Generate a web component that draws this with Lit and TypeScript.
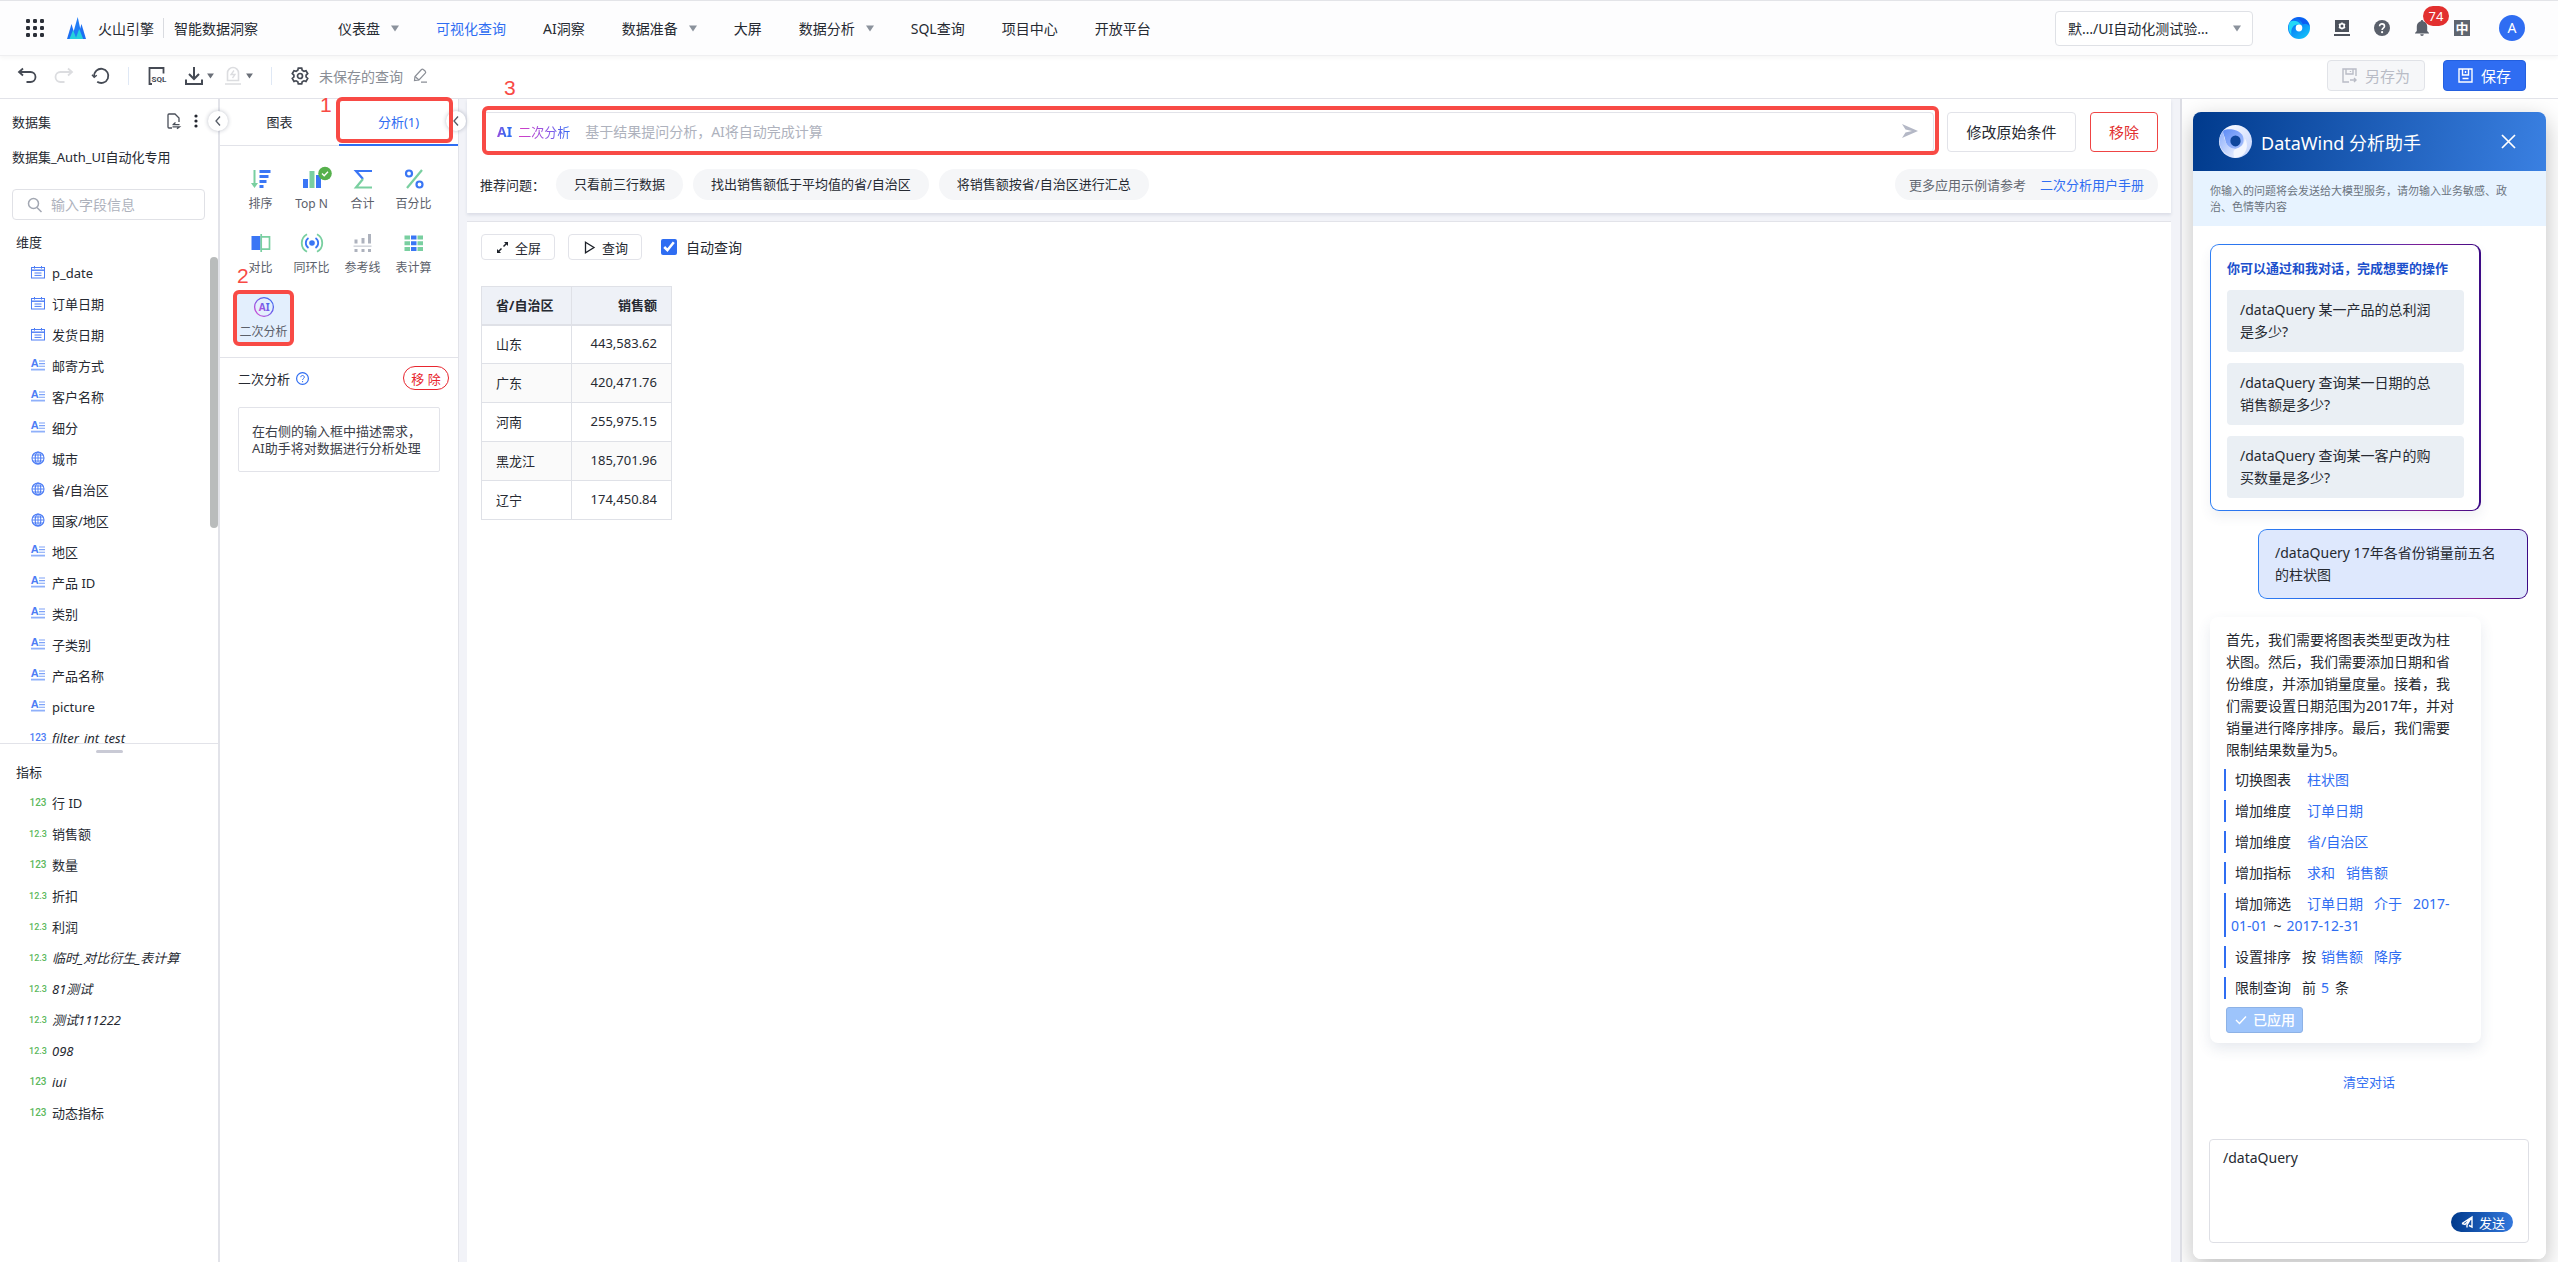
import { LitElement, html, css, svg, nothing } from "lit";
import { customElement } from "lit/decorators.js";
import { classMap } from "lit/directives/class-map.js";

type FieldKind = "date" | "text" | "geo" | "int" | "float";
interface Field {
  kind: FieldKind;
  name: string;
  derived?: boolean;
}

const DIMENSIONS: Field[] = [
  { kind: "date", name: "p_date" },
  { kind: "date", name: "订单日期" },
  { kind: "date", name: "发货日期" },
  { kind: "text", name: "邮寄方式" },
  { kind: "text", name: "客户名称" },
  { kind: "text", name: "细分" },
  { kind: "geo", name: "城市" },
  { kind: "geo", name: "省/自治区" },
  { kind: "geo", name: "国家/地区" },
  { kind: "text", name: "地区" },
  { kind: "text", name: "产品 ID" },
  { kind: "text", name: "类别" },
  { kind: "text", name: "子类别" },
  { kind: "text", name: "产品名称" },
  { kind: "text", name: "picture" },
  { kind: "int", name: "filter_int_test", derived: true },
];

const METRICS: Field[] = [
  { kind: "int", name: "行 ID" },
  { kind: "float", name: "销售额" },
  { kind: "int", name: "数量" },
  { kind: "float", name: "折扣" },
  { kind: "float", name: "利润" },
  { kind: "float", name: "临时_对比衍生_表计算", derived: true },
  { kind: "float", name: "81测试", derived: true },
  { kind: "float", name: "测试111222", derived: true },
  { kind: "float", name: "098", derived: true },
  { kind: "int", name: "iui", derived: true },
  { kind: "int", name: "动态指标" },
];

const NAV = [
  { label: "仪表盘", menu: true },
  { label: "可视化查询", active: true },
  { label: "AI洞察" },
  { label: "数据准备", menu: true },
  { label: "大屏" },
  { label: "数据分析", menu: true },
  { label: "SQL查询" },
  { label: "项目中心" },
  { label: "开放平台" },
];

const ROWS = [
  ["山东", "443,583.62"],
  ["广东", "420,471.76"],
  ["河南", "255,975.15"],
  ["黑龙江", "185,701.96"],
  ["辽宁", "174,450.84"],
];

const fieldIcon = (kind: FieldKind) => {
  switch (kind) {
    case "date":
      return html`<svg class="ficon" viewBox="0 0 14 14" fill="none" stroke="#4d7df5">
        <rect x="0.5" y="2.5" width="13" height="10.5" />
        <path d="M0.5 5.2h13" stroke-width="1.4" />
        <path d="M3.5 1v2.6M10.5 1v2.6M3.5 8h7M3.5 10.4h7" />
      </svg>`;
    case "text":
      return html`<svg class="ficon" viewBox="0 0 14 14">
        <text class="fa" x="-0.3" y="9.4">A</text>
        <path d="M8 3h6M8 5.6h6M8 8.2h6" stroke="#7ea2f8" stroke-width="1.1" />
        <path d="M0 11.6h14" stroke="#8fb0fa" stroke-width="1.8" />
      </svg>`;
    case "geo":
      return html`<svg class="ficon" viewBox="0 0 14 14" fill="none" stroke="#4d7df5" stroke-width="1.1">
        <circle cx="7" cy="7" r="6" />
        <ellipse cx="7" cy="7" rx="2.8" ry="6" />
        <path d="M7 1v12M1 7h12M1.8 4h10.4M1.8 10h10.4" stroke-width="0.9" />
      </svg>`;
    default:
      return nothing;
  }
};

const caret = (cls = "caret") =>
  html`<svg class=${cls} viewBox="0 0 8 7"><path d="M0 0.5h8L4 6.5z" fill="currentColor" /></svg>`;

@customElement("app-root")
export class AppRoot extends LitElement {
  static styles = css`
    :host {
      display: block;
      font-family: "Noto Sans", "Noto Sans CJK SC", sans-serif;
      font-size: 13px;
      color: #262a32;
      --blue: #2f6df2;
      --line: #e2e3e9;
      --red: #f84a45;
    }
    * { box-sizing: border-box; }
    button, input, select, textarea { font: inherit; color: inherit; margin: 0; }
    button { cursor: pointer; background: none; border: 0; padding: 0; white-space: nowrap; }
    a { color: inherit; text-decoration: none; }
    ul { list-style: none; margin: 0; padding: 0; }
    p, h1, h2, h3 { margin: 0; font-weight: 400; font-size: inherit; }
    svg { display: block; flex: none; overflow: visible; }
    .page { display: flex; flex-direction: column; height: 100vh; min-height: 1200px; background: #fff; overflow: hidden; }

    /* top bar */
    .top {
      display: flex; align-items: center; flex: none; height: 56px; padding: 0 33px 0 26px;
      border-top: 1px solid #e3e4e8; border-bottom: 1px solid #efeff1; background: #fdfdfe;
      font-size: 14px; box-shadow: 0 2px 4px rgba(0, 0, 0, 0.04); z-index: 1;
    }
    .apps { width: 18px; height: 18px; margin-right: 23px; }
    .brand { display: flex; align-items: center; }
    .brand svg { width: 19px; height: 22px; margin-right: 12px; }
    .brand span + span { border-left: 1px solid #d9dbe0; padding-left: 10px; margin-left: 9px; }
    .nav { display: flex; gap: 37px; margin-left: 80px; flex: 1; }
    .nav a { display: flex; align-items: center; gap: 11px; white-space: nowrap; }
    .nav a.active { color: var(--blue); }
    .caret { width: 8px; height: 7px; color: #8b929c; }
    .space { display: grid; width: 198px; height: 35px; margin-right: 35px; align-items: center; }
    .space > * { grid-area: 1 / 1; }
    .space select {
      appearance: none; width: 100%; height: 35px; border: 1px solid #dfe1e6; border-radius: 4px;
      background: #fff; padding: 0 36px 0 12px; text-overflow: ellipsis;
    }
    .space .caret { justify-self: end; margin-right: 12px; pointer-events: none; }
    .tray { display: flex; align-items: center; gap: 24px; }
    .tray svg { width: 16px; height: 16px; }
    .tray .orb { width: 22px; height: 22px; }
    .bell { position: relative; }
    .badge {
      position: absolute; left: 9px; top: -14px; width: 26px; height: 20px; border-radius: 10px;
      background: #e2302f; color: #fff; font-size: 13px; line-height: 20px; text-align: center;
    }
    .zh { width: 16px; height: 16px; background: #5f656f; color: #fff; font-size: 13px; font-weight: 700; line-height: 16px; text-align: center; }
    .avatar { width: 26px; height: 26px; border-radius: 50%; background: #2f6df2; color: #fff; line-height: 26px; text-align: center; margin-left: 5px; }

    /* tool bar */
    .bar { display: flex; align-items: center; flex: none; height: 43px; padding: 0 32px 3px 18px; border-bottom: 1px solid var(--line); color: #454a54; }
    .bar button { display: flex; align-items: center; gap: 4px; }
    .bar .ic { width: 18px; height: 18px; fill: none; stroke: currentColor; stroke-width: 2; }
    .bar .dim { color: #dcdde0; }
    .bar .small { width: 7px; height: 6px; color: #6a6f78; }
    .bar .acts { display: flex; gap: 19px; }
    .bar .pair { display: flex; gap: 10px; }
    .bar .sep { width: 1px; height: 18px; background: #dfe8f5; margin: 0 19px 0 18px; }
    .bar .title { display: flex; align-items: center; gap: 10px; font-size: 14px; color: #8a8e96; flex: 1; }
    .bar .pen { width: 15px; height: 15px; stroke-width: 1.2; }
    .bar .sqlt { font: 700 8px Roboto, sans-serif; fill: currentColor; stroke: none; }
    .bar .btn { height: 31px; border: 1px solid #e1e3e8; border-radius: 4px; font-size: 15px; gap: 8px; padding: 0 14px; margin-left: 18px; background: #f6f7f9; color: #b9bcc6; }
    .bar .btn svg { width: 15px; height: 15px; fill: none; stroke: currentColor; stroke-width: 1.4; }
    .bar .save { background: var(--blue); border-color: #2460e0; color: #fff; }

    .body { display: flex; flex: 1; min-height: 0; background: #f2f3f8; }

    /* field list */
    .fields { position: relative; flex: none; width: 220px; border-right: 2px solid var(--line); background: #fff; display: flex; flex-direction: column; }
    .dims { flex: 645 1 0; min-height: 0; display: flex; flex-direction: column; overflow: hidden; }
    .mets { flex: 518 1 0; min-height: 0; border-top: 1px solid var(--line); overflow: hidden; }
    .fhead { display: flex; align-items: center; height: 44px; padding: 0 20px 0 12px; gap: 14px; flex: none; }
    .fhead h2 { flex: 1; }
    .fhead svg { width: 13px; height: 16px; }
    .fhead .more { width: 4px; height: 14px; }
    .dsname { height: 28px; line-height: 28px; padding-left: 12px; flex: none; white-space: nowrap; }
    .search { display: flex; align-items: center; gap: 8px; margin: 18px 13px 0 12px; height: 31px; flex: none; border: 1px solid #e0e1e6; border-radius: 4px; padding: 0 14px; }
    .search svg { width: 16px; height: 16px; }
    .search input { border: 0; outline: 0; padding: 0; width: 100%; min-width: 0; font-size: 14px; background: none; }
    ::placeholder { color: #aeb2bd; opacity: 1; }
    .ftitle { height: 26px; line-height: 26px; padding-left: 16px; flex: none; }
    .dims .ftitle { margin: 9px 0 2px; }
    .fwrap { display: flex; flex: 1; min-height: 0; overflow: hidden; }
    .fwrap ul { flex: 1; }
    .thumb { width: 8px; height: 271px; border-radius: 4px; background: #b9bcbc; }
    .frow { display: flex; align-items: center; gap: 7px; height: 31px; padding-left: 31px; white-space: nowrap; }
    .frow.derived .fname { font-style: italic; }
    .ficon { width: 14px; height: 14px; margin-top: -2px; }
    .fa { font: 700 11px "Liberation Sans", sans-serif; fill: #4d7df5; }
    .fnum { width: 14px; font: 500 10px/14px Roboto, sans-serif; color: #5cb85c; display: flex; justify-content: center; }
    .fnum.float { font-size: 9px; }
    .dims .fnum { color: #4d7df5; }
    .grip { width: 27px; height: 3px; border-radius: 2px; background: #c9cad5; margin: 6px auto 6px; }
    .mets .ftitle { margin-bottom: 2px; }
    .fold {
      position: absolute; right: -10px; top: 12px; width: 20px; height: 20px; border-radius: 50%; z-index: 2;
      background: #fff; box-shadow: 0 0 4px rgba(30, 40, 70, 0.3); display: flex; align-items: center; justify-content: center;
    }
    .fold svg { width: 6px; height: 10px; fill: none; stroke: #555b66; stroke-width: 1.3; }

    /* analysis panel */
    .panel { position: relative; flex: none; width: 239px; border-right: 1px solid var(--line); background: #fff; margin-right: 8px; }
    .panel .fold { right: -8px; }
    .tabs { display: grid; grid-template-columns: 1fr 1fr; height: 47px; border-bottom: 1px solid var(--line); }
    .tabs button { position: relative; padding-bottom: 2px; }
    .tabs button.on { color: var(--blue); }
    .tabs button.on::after { content: ""; position: absolute; left: 0; right: 0; bottom: -1px; height: 2px; background: var(--blue); }
    .mark { position: absolute; border: 4px solid var(--red); border-radius: 6px; z-index: 3; pointer-events: none; }
    .m1 { inset: -2px 5px 2px -3px; }
    .m2 { inset: -4px -4px -4px -4px; }
    .m3 { inset: -7px -6px -4px -1px; }
    .num { position: absolute; z-index: 3; font: 21px/20px "Liberation Sans", sans-serif; color: var(--red); pointer-events: none; }
    .n1 { left: 100px; top: -4px; }
    .n2 { left: 0; top: -28px; }
    .n3 { left: 37px; top: -21px; }
    .tools { display: grid; grid-template-columns: repeat(4, 51px); row-gap: 18px; padding: 22px 0 14px 15px; border-bottom: 1px solid var(--line); }
    .tool { position: relative; display: flex; flex-direction: column; align-items: center; gap: 4px; font-size: 12px; line-height: 20px; color: #5b606a; }
    .tool svg { width: 22px; height: 22px; }
    .tool.on { width: 53px; margin: -2px 0 0 2px; padding-top: 2px; background: #e3effd; border-bottom: 1px solid #8fb6f0; }
    .tool .ait { font: 700 10px "Noto Sans", sans-serif; }
    .sub { display: flex; align-items: center; padding: 8px 9px 0 18px; }
    .sub svg { width: 13px; height: 13px; margin-left: 6px; }
    .sub button { margin-left: auto; height: 24px; width: 46px; border: 1px solid #e8262f; border-radius: 12px; color: #e8262f; }
    .tip { margin: 17px 18px 0 18px; border: 1px solid var(--line); border-radius: 2px; padding: 15px 13px 14px; line-height: 17px; color: #3c4049; white-space: nowrap; }

    /* result area */
    .main { position: relative; flex: 1; min-width: 0; display: flex; flex-direction: column; gap: 8px; }
    .ask { background: #fff; padding: 13px 13px 13px 15px; box-shadow: 0 2px 3px rgba(40, 60, 100, 0.12); }
    .askrow { display: flex; height: 40px; }
    .askbox { position: relative; flex: 1; display: flex; align-items: center; border: 1px solid var(--line); border-radius: 4px; padding: 0 15px 2px 14px; margin-right: 13px; }
    .ai { font-weight: 700; font-size: 14px; background: linear-gradient(90deg, #a14bdc, #2f6df2 60%); background-clip: text; color: transparent; margin-right: 6px; }
    .aiw { background: linear-gradient(90deg, #d63cc4, #8a58e6 60%, #2f6df2); background-clip: text; color: transparent; margin-right: 15px; white-space: nowrap; }
    .askbox input { flex: 1; border: 0; outline: 0; padding: 0; font-size: 14px; background: none; }
    .askbox svg { width: 16px; height: 14px; }
    .askrow > button { border: 1px solid var(--line); border-radius: 4px; font-size: 15px; padding-bottom: 2px; }
    .edit { width: 129px; margin-right: 14px; }
    .askrow > .drop { width: 68px; border-color: #ef4444; color: #e2302f; }
    .chips { display: flex; align-items: center; margin-top: 17px; gap: 10px; white-space: nowrap; }
    .chips span.lab { width: 66px; margin-left: -2px; }
    .chips button, .more-help { height: 31px; border-radius: 16px; background: #f5f6f8; padding: 0 18px 2px; }
    .more-help { margin-left: auto; display: flex; align-items: center; gap: 14px; padding: 0 14px; color: #646973; }
    .more-help a, .link { color: var(--blue); }
    .result { flex: 1; border-top: 1px solid var(--line); padding: 12px 14px; background: #fff; }
    .runs { display: flex; align-items: center; }
    .runs button { display: flex; align-items: center; gap: 6px; height: 26px; border: 1px solid var(--line); border-radius: 4px; padding: 0 13px 0 14px; margin-right: 13px; }
    .runs svg { width: 13px; height: 13px; fill: none; stroke: #1d2129; stroke-width: 1.3; }
    .runs label { display: flex; align-items: center; gap: 9px; font-size: 14px; margin-left: 6px; }
    .runs input { width: 16px; height: 16px; accent-color: var(--blue); }
    table { border-collapse: collapse; margin-top: 26px; font-size: 13px; }
    th, td { border: 1px solid #dfe1e7; height: 39px; padding: 0 14px 2px; text-align: left; }
    th { background: #eef1f7; height: 38px; border-bottom-width: 2px; font-weight: 700; width: 90px; white-space: nowrap; }
    th + th, td + td { text-align: right; width: 100px; }
    tr:nth-child(even) td { background: #fafafa; }

    /* assistant */
    .side { flex: none; width: 378px; margin-left: 9px; border-left: 2px solid #dcdde4; background: #fff; padding: 13px 12px 3px 11px; display: flex; overflow: hidden; }
    .bot { flex: 1; min-width: 0; display: flex; flex-direction: column; border-radius: 8px; overflow: hidden; background: #fff; }
    .shade { flex: 1; min-width: 0; display: flex; border-radius: 8px; box-shadow: 0 8px 24px rgba(0, 0, 0, 0.26); }
    .bhead { display: flex; align-items: center; height: 59px; flex: none; padding: 0 30px 0 26px; color: #fff; font-size: 18px; background: linear-gradient(100deg, #003a8c, #3a80e2); }
    .bhead svg { width: 33px; height: 33px; margin-right: 9px; }
    .bhead h2 { flex: 1; white-space: nowrap; }
    .bhead button svg { width: 15px; height: 15px; margin: 0; stroke: #fff; stroke-width: 1.7; }
    .warn { flex: none; height: 55px; background: #e7f3ff; color: #6b7480; font-size: 11px; line-height: 16px; padding: 12px 30px 0 17px; }
    .talk { flex: 1; min-height: 0; display: flex; flex-direction: column; align-items: flex-start; padding: 18px 18px 0 17px; font-size: 14px; line-height: 22px; }
    .intro, .mine {
      border: 1px solid transparent; border-radius: 9px;
      background: linear-gradient(#fff, #fff) padding-box, linear-gradient(90deg, #2f80f5, #1d4ed8 50%, #86198f 80%, #3b0a85) border-box;
    }
    .intro { width: 271px; padding: 12px 16px 12px; border-width: 1px 2px 1px 1px; box-shadow: 0 6px 12px rgba(60, 80, 120, 0.08); }
    .intro h3 { font-size: 13px; font-weight: 700; color: #1c50cc; white-space: nowrap; margin-bottom: 11px; }
    .intro button { display: block; width: 237px; height: 62px; text-align: left; white-space: normal; background: #eaeff4; border-radius: 4px; padding: 0 22px 0 13px; line-height: 22px; }
    .intro button + button { margin-top: 11px; }
    .mine { align-self: flex-end; width: 270px; margin-top: 18px; padding: 12px 26px 12px 16px; background: linear-gradient(#dee8fd, #dee8fd) padding-box, linear-gradient(90deg, #2f80f5, #1d4ed8 50%, #86198f 80%, #3b0a85) border-box; }
    .reply { width: 271px; margin-top: 18px; padding: 12px 21px 10px 16px; border-radius: 8px; box-shadow: 0 6px 14px rgba(60, 80, 120, 0.12); }
    .steps { display: grid; gap: 9px; margin: 8px 0 8px -2px; }
    .steps li { border-left: 2px solid var(--blue); padding-left: 5px; min-height: 22px; }
    .steps .k { margin: 0 11px 0 4px; }
    .steps .v { color: var(--blue); margin: 0 6px 0 5px; }
    .done { display: flex; align-items: center; gap: 6px; height: 26px; border: 1px solid #8db2e6; border-radius: 3px; background: #9dc4fb; color: #fff; padding: 0 7px 0 8px; font-weight: 500; }
    .done svg { width: 12px; height: 10px; }
    .clear { align-self: center; font-size: 13px; line-height: 20px; margin: 29px 0 0; }
    .write { position: relative; display: flex; flex: none; flex-direction: column; height: 104px; margin: 0 17px 16px 16px; border: 1px solid #dedfe5; border-radius: 4px; }
    .write textarea { flex: 1; border: 0; outline: 0; resize: none; background: none; padding: 8px 13px; font-size: 14px; line-height: 20px; }
    .send { align-self: flex-end; display: flex; align-items: center; gap: 6px; height: 20px; border-radius: 10px; margin: 0 15px 10px 0; padding: 0 8px 0 10px; color: #fff; background: linear-gradient(90deg, #003a8c, #3378dd); }
    .send svg { width: 12px; height: 12px; fill: none; stroke: #fff; stroke-width: 1.4; }
  `;

  private field(f: Field) {
    const numeric = f.kind === "int" || f.kind === "float";
    return html`<li class=${classMap({ frow: true, derived: !!f.derived })}>
      ${numeric
        ? html`<span class=${classMap({ fnum: true, float: f.kind === "float" })}>${f.kind === "int" ? "123" : "12.3"}</span>`
        : fieldIcon(f.kind)}
      <span class="fname">${f.name}</span>
    </li>`;
  }

  private fold(label: string) {
    return html`<button class="fold" aria-label=${label}><svg viewBox="0 0 6 10"><path d="M5 0.5L1 5l4 4.5" /></svg></button>`;
  }

  private top() {
    return html`<header class="top">
      <svg class="apps" viewBox="0 0 18 18" fill="#2b2f38">
        ${[0, 7, 14].map((y) => [0, 7, 14].map((x) => svg`<rect x=${x} y=${y} width="4" height="4" rx="1.2" />`))}
      </svg>
      <div class="brand">
        <svg viewBox="0 0 19 22">
          <path d="M0 22L4.500 7 9 22z" fill="#1d6ff2" />
          <path d="M10 22L14.500 7 19 22z" fill="#1d6ff2" />
          <path d="M4.500 22L10.700 0l4.800 22z" fill="#1f7cf6" />
          <path d="M2.500 22L6 13l3.600 9z" fill="#26d0dc" />
          <path d="M8.500 22l3.700-10 4 10z" fill="#26d0dc" />
        </svg>
        <span>火山引擎</span><span>智能数据洞察</span>
      </div>
      <nav class="nav">
        ${NAV.map((n) => html`<a href="#" class=${classMap({ active: !!n.active })}>${n.label}${n.menu ? caret() : nothing}</a>`)}
      </nav>
      <div class="space">
        <select aria-label="项目"><option>默…/UI自动化测试验…</option></select>
        ${caret()}
      </div>
      <div class="tray">
        <svg class="orb" viewBox="0 0 32 32">
          <defs>
            <linearGradient id="g1" x1="0" y1="0" x2="0.8" y2="1"><stop offset="0" stop-color="#0a4df0" /><stop offset="0.500" stop-color="#0b8cf8" /><stop offset="1" stop-color="#12c4f8" /></linearGradient>
          </defs>
          <circle cx="16" cy="16" r="16" fill="url(#g1)" />
          <path d="M3 7C0 13 0 20 5 26c-1-7 1-12 5-14 3-2 6-1 9 0-3-6-11-8-16-5z" fill="#22d8f8" />
          <path d="M12 1c9-2 19 4 19.500 13-3-5-7-5-10-3C20 6 16 3 12 1z" fill="#0d5cf2" />
          <ellipse cx="16" cy="16" rx="4.800" ry="5" fill="#fff" />
        </svg>
        <svg viewBox="0 0 16 16" fill="#4d525c">
          <path d="M1 0h14v12H1zM0 14h16v2H0z" />
          <circle cx="8" cy="6" r="2.300" fill="none" stroke="#fff" stroke-width="1.600" />
          <path d="M8 2.400v1.400M8 8.200v1.400M4.900 4.200l1.200.7M9.900 7.100l1.200.7M11.100 4.200l-1.200.7M6.100 7.100l-1.200.7" stroke="#fff" stroke-width="1.400" />
        </svg>
        <svg viewBox="0 0 16 16">
          <circle cx="8" cy="8" r="8" fill="#5a606b" />
          <path d="M5.600 6.200c0-3.200 4.900-3 4.900 0 0 1.900-2.400 1.900-2.400 3.800" fill="none" stroke="#fff" stroke-width="1.600" />
          <circle cx="8.100" cy="12.200" r="1.100" fill="#fff" />
        </svg>
        <span class="bell">
          <svg viewBox="0 0 16 16" fill="#5a606b">
            <path d="M8 0a1.200 1.200 0 0 1 1.200 1.300C11.800 1.900 13.200 4 13.200 6.500V11l1.800 2v.6H1V13l1.800-2V6.500C2.800 4 4.200 1.900 6.800 1.300A1.200 1.200 0 0 1 8 0zM6.200 14.300h3.600a1.800 1.800 0 0 1-3.600 0z" />
          </svg>
          <span class="badge">74</span>
        </span>
        <span class="zh">中</span>
        <span class="avatar">A</span>
      </div>
    </header>`;
  }

  private bar() {
    return html`<div class="bar">
      <div class="acts">
        <button aria-label="撤销"><svg class="ic" viewBox="0 0 18 18"><path d="M5 1.500L1 5l4 3.500M1 5h11.500a4.600 4.600 0 0 1 0 10H8.500" stroke-width="1.800" /></svg></button>
        <button aria-label="重做" class="dim"><svg class="ic" viewBox="0 0 18 18"><path d="M13 1.500L17 5l-4 3.500M17 5H5.500a4.600 4.600 0 0 0 0 10h4" stroke-width="1.800" /></svg></button>
        <button aria-label="重置"><svg class="ic" viewBox="0 0 18 18"><path d="M2.200 9.500A7.100 7.100 0 1 1 5.200 14.700" stroke-width="1.800" /><path d="M0 7.800l2.200 2.400 2.600-2" stroke-width="1.400" /></svg></button>
      </div>
      <span class="sep"></span>
      <div class="acts">
        <button aria-label="SQL"><svg class="ic" viewBox="0 0 18 18"><path d="M4 17H1.500V1h14v5.500" stroke-width="1.800" /><text class="sqlt" x="3.600" y="14.500">SQL</text></svg></button>
        <div class="pair">
          <button aria-label="下载"><svg class="ic" viewBox="0 0 18 18"><path d="M9 0v12M4 7l5 5 5-5M1 12.500V17h16v-4.500" /></svg>${caret("small")}</button>
          <button aria-label="加速" class="dim"><svg class="ic" viewBox="0 0 18 18"><path d="M3.500 13.500V6a5.500 5.500 0 0 1 11 0v7.500zM1 17h16" stroke-width="1.600" /><path d="M10 3.500L7 7.500h4L8.500 11" stroke-width="1.300" /></svg>${caret("small")}</button>
        </div>
      </div>
      <span class="sep"></span>
      <div class="title">
        <svg class="ic" viewBox="0 0 18 18"><path d="M7.300 1.200h3.400l.5 2.100 1.700 1 2.100-.6 1.700 2.900-1.600 1.500v1.900l1.600 1.500-1.700 2.900-2.100-.6-1.700 1-.5 2.100H7.300l-.5-2.100-1.700-1-2.100.6-1.700-2.900 1.600-1.500V8.100L1.300 6.600 3 3.700l2.100.6 1.700-1z" stroke="#454a54" stroke-width="1.700" /><circle cx="9" cy="9" r="2.500" stroke="#454a54" stroke-width="1.700" /></svg>
        <span>未保存的查询</span>
        <svg class="ic pen" viewBox="0 0 15 15" stroke="#777"><path d="M1.500 12.500l.5-4 6.500-7a1.300 1.300 0 0 1 1.800 0l2 1.800a1.300 1.300 0 0 1 0 1.800L6 12zM8 14.200h6" /><path d="M2 8.500l4 3.500" /></svg>
      </div>
      <button class="btn" disabled>
        <svg viewBox="0 0 15 15"><path d="M7 14H1V1h13v7M4 1v5h7V1M8.500 3v1M8 12h6M12 10l2 2-2 2" /></svg>另存为
      </button>
      <button class="btn save">
        <svg viewBox="0 0 15 15"><path d="M1 1h13v13H1zM4.500 1v6h6V1M4.500 10.500h6M7.500 3v2" /></svg>保存
      </button>
    </div>`;
  }

  private fields() {
    return html`<aside class="fields">
      ${this.fold("收起数据集")}
      <section class="dims">
        <div class="fhead">
          <h2>数据集</h2>
          <svg viewBox="0 0 13 16" fill="none" stroke="#4a4f59" stroke-width="1.300"><path d="M5 15H2a1 1 0 0 1-1-1V2a1 1 0 0 1 1-1h6l4 4v4" /><path d="M5.500 11.700h7M8.500 9.500L6 11.700M5.500 13.800h7L10 15.800" /></svg>
          <svg class="more" viewBox="0 0 4 14" fill="#23272f"><circle cx="2" cy="2" r="1.600" /><circle cx="2" cy="7" r="1.600" /><circle cx="2" cy="12" r="1.600" /></svg>
        </div>
        <div class="dsname">数据集_Auth_UI自动化专用</div>
        <label class="search">
          <svg viewBox="0 0 16 16" fill="none" stroke="#a2a7b2" stroke-width="1.500"><circle cx="6.500" cy="6.500" r="5" /><path d="M10 10.500l4.500 4.500" /></svg>
          <input placeholder="输入字段信息" aria-label="输入字段信息" />
        </label>
        <h3 class="ftitle">维度</h3>
        <div class="fwrap"><ul>${DIMENSIONS.map((f) => this.field(f))}</ul><span class="thumb"></span></div>
      </section>
      <section class="mets">
        <div class="grip"></div>
        <h3 class="ftitle">指标</h3>
        <ul>${METRICS.map((f) => this.field(f))}</ul>
      </section>
    </aside>`;
  }

  private tools() {
    const b = "#3a76f5";
    const g = "#79cfa0";
    const items = [
      ["排序", svg`<path d="M4.500 2v16" stroke=${g} stroke-width="2" /><path d="M1 15h7l-3.500 5z" fill=${g} /><path d="M9.500 3.500h11M9.500 8.500h9M9.500 13.500h7M9.500 18.500h4" stroke=${b} stroke-width="3" />`],
      ["Top N", svg`<path d="M2 11h5v9H2z" fill=${b} /><path d="M8.500 3h5v17h-5z" fill=${g} /><path d="M15 7h5v13h-5z" fill=${b} /><circle cx="24" cy="5.500" r="6.800" fill="#56b04c" /><path d="M21 5.500l2.200 2.300L27 3.800" fill="none" stroke="#fff" stroke-width="1.300" />`],
      ["合计", svg`<path d="M20 3H4l7 8" fill="none" stroke=${b} stroke-width="2.200" /><path d="M11 11l-7 8.500h16" fill="none" stroke=${g} stroke-width="2.200" />`],
      ["百分比", svg`<path d="M19 2L4 20" stroke=${g} stroke-width="2.200" /><circle cx="6" cy="5.500" r="3" fill="none" stroke=${b} stroke-width="2.200" /><circle cx="16.500" cy="16.500" r="3" fill="none" stroke=${b} stroke-width="2.200" />`],
      ["对比", svg`<path d="M1.500 4h9v14h-9z" fill=${b} /><path d="M12 4.800h7.500v12.400H12" fill="none" stroke=${g} stroke-width="1.700" /><path d="M11.200 2v18" stroke=${g} stroke-width="1.700" />`],
      ["同环比", svg`<circle cx="11" cy="11" r="2.800" fill=${b} /><path d="M7.500 6a6 6 0 0 0 0 10M14.500 6a6 6 0 0 1 0 10" fill="none" stroke=${b} stroke-width="1.800" /><path d="M6 2.200a10 10 0 0 0 0 17.600M16 2.200a10 10 0 0 1 0 17.600" fill="none" stroke=${g} stroke-width="1.800" />`],
      ["参考线", svg`<path d="M2.500 7.500h3v4h-3zM9.500 6h3v5.500h-3zM16 2h3v9.500h-3zM2.500 17h3v3h-3zM9.500 17h3v3h-3zM16 17h3v3h-3z" fill="#adb2bd" /><path d="M1.500 14.200h18" stroke="#d3d6dc" stroke-width="1.600" />`],
      ["表计算", svg`<path d="M1.500 3.500h5.500v4H1.500zM1.500 9.200h5.500v4H1.500zM1.500 15h5.500v4H1.500zM14.500 3.500h5.500v4h-5.500zM14.500 9.200h5.500v4h-5.500zM14.500 15h5.500v4h-5.500z" fill=${g} /><path d="M8 3.500h5.500v4H8zM8 9.200h5.500v4H8zM8 15h5.500v4H8z" fill=${b} />`],
    ] as const;
    return html`<section class="panel">
      ${this.fold("收起分析")}
      <span class="num n1">1</span>
      <div class="tabs">
        <button>图表</button>
        <button class="on">分析(1)<span class="mark m1"></span></button>
      </div>
      <div class="tools">
        ${items.map(([label, icon]) => html`<button class="tool"><svg viewBox="0 0 22 22">${icon}</svg>${label}</button>`)}
        <button class="tool on">
          <svg viewBox="0 0 22 22">
            <defs><linearGradient id="ag" x1="0" y1="1" x2="1" y2="0"><stop offset="0" stop-color="#e04bd0" /><stop offset="0.500" stop-color="#7a5be8" /><stop offset="1" stop-color="#2f6df2" /></linearGradient></defs>
            <circle cx="11" cy="11" r="9.400" fill="none" stroke="url(#ag)" stroke-width="1.300" />
            <text class="ait" x="11.200" y="14.500" text-anchor="middle" fill="url(#ag)">AI</text>
          </svg>
          二次分析
          <span class="mark m2"></span><span class="num n2">2</span>
        </button>
      </div>
      <div class="sub">
        <span>二次分析</span>
        <svg viewBox="0 0 13 13" fill="none" stroke="#2f6df2"><circle cx="6.500" cy="6.500" r="5.900" stroke-width="1.200" /><path d="M4.800 5.200c0-2.300 3.500-2.200 3.500 0 0 1.300-1.700 1.300-1.700 2.700M6.600 9v1.200" /></svg>
        <button>移 除</button>
      </div>
      <div class="tip">在右侧的输入框中描述需求，<br />AI助手将对数据进行分析处理</div>
    </section>`;
  }

  private main() {
    return html`<main class="main">
      <span class="num n3">3</span>
      <section class="ask">
        <div class="askrow">
          <label class="askbox">
            <span class="ai">AI</span><span class="aiw">二次分析</span>
            <input placeholder="基于结果提问分析，AI将自动完成计算" />
            <svg viewBox="0 0 16 14"><path d="M0 0l16 7-16 7 3.500-5.500L10 7 3.500 5.500z" fill="#b4b8c6" /></svg>
            <span class="mark m3"></span>
          </label>
          <button class="edit">修改原始条件</button>
          <button class="drop">移除</button>
        </div>
        <div class="chips">
          <span class="lab">推荐问题：</span>
          <button>只看前三行数据</button>
          <button>找出销售额低于平均值的省/自治区</button>
          <button>将销售额按省/自治区进行汇总</button>
          <span class="more-help">更多应用示例请参考<a href="#">二次分析用户手册</a></span>
        </div>
      </section>
      <section class="result">
        <div class="runs">
          <button><svg viewBox="0 0 13 13"><path d="M7.500 5.500l4-4M1.500 11.500l4-4" stroke-width="1.500" /><path d="M8 1h4v4zM1 8v4h4z" fill="#1d2129" stroke="none" /></svg>全屏</button>
          <button><svg viewBox="0 0 13 13"><path d="M2.500 1.200l8.500 5.300-8.500 5.300z" /></svg>查询</button>
          <label><input type="checkbox" checked />自动查询</label>
        </div>
        <table>
          <thead><tr><th>省/自治区</th><th>销售额</th></tr></thead>
          <tbody>${ROWS.map(([p, v]) => html`<tr><td>${p}</td><td>${v}</td></tr>`)}</tbody>
        </table>
      </section>
    </main>`;
  }

  private bot() {
    const v = (t: string) => html`<span class="v">${t}</span>`;
    const k = (t: string) => html`<span class="k">${t}</span>`;
    return html`<aside class="side"><div class="shade"><div class="bot">
      <div class="bhead">
        <svg viewBox="0 0 32 32">
          <defs>
            <linearGradient id="g2" x1="0" y1="0" x2="1" y2="1"><stop offset="0" stop-color="#8fb0fb" /><stop offset="1" stop-color="#e9efff" /></linearGradient>
            <linearGradient id="g3" x1="0" y1="0" x2="1" y2="1"><stop offset="0" stop-color="#ffffff" /><stop offset="1" stop-color="#c3d3fd" /></linearGradient>
            <linearGradient id="g4" x1="0" y1="0" x2="1" y2="1"><stop offset="0" stop-color="#5f8df6" /><stop offset="1" stop-color="#a9c1fc" /></linearGradient>
          </defs>
          <circle cx="16" cy="16" r="16" fill="url(#g3)" />
          <path d="M4 5.500C9 3 18 4 22.500 9.500c3 5 1 12-5.500 13.500C10 24 6.500 19 6 14 5.500 10 3 8 4 5.500z" fill="url(#g4)" />
          <path d="M4 5.500C0 10-1 18 3 24c4 5 9 7 13 8-3-2-3-6-1-9C8 22 5 16 4 5.500z" fill="url(#g2)" />
          <path d="M15 31.800c-2-5-1-8 3-9.300 4-1.500 7-4.500 7-9.500 4 5 3 18-10 18.800z" fill="#f3f6ff" />
          <ellipse cx="16" cy="15.500" rx="5" ry="5.300" fill="#0f479d" />
        </svg>
        <h2>DataWind 分析助手</h2>
        <button aria-label="关闭"><svg viewBox="0 0 15 15"><path d="M1 1l13 13M14 1L1 14" /></svg></button>
      </div>
      <p class="warn">你输入的问题将会发送给大模型服务，请勿输入业务敏感、政治、色情等内容</p>
      <div class="talk">
        <div class="intro">
          <h3>你可以通过和我对话，完成想要的操作</h3>
          <button>/dataQuery 某一产品的总利润是多少?</button>
          <button>/dataQuery 查询某一日期的总销售额是多少?</button>
          <button>/dataQuery 查询某一客户的购买数量是多少?</button>
        </div>
        <div class="mine">/dataQuery 17年各省份销量前五名的柱状图</div>
        <div class="reply">
          <p>首先，我们需要将图表类型更改为柱状图。然后，我们需要添加日期和省份维度，并添加销量度量。接着，我们需要设置日期范围为2017年，并对销量进行降序排序。最后，我们需要限制结果数量为5。</p>
          <ul class="steps">
            <li>${k("切换图表")}${v("柱状图")}</li>
            <li>${k("增加维度")}${v("订单日期")}</li>
            <li>${k("增加维度")}${v("省/自治区")}</li>
            <li>${k("增加指标")}${v("求和")}${v("销售额")}</li>
            <li>${k("增加筛选")}${v("订单日期")}${v("介于")}<span class="v">2017-<wbr />01-01</span>~<span class="v">2017-12-31</span></li>
            <li>${k("设置排序")}按${v("销售额")}${v("降序")}</li>
            <li>${k("限制查询")}前${v("5")}条</li>
          </ul>
          <button class="done"><svg viewBox="0 0 12 10" fill="none" stroke="#fff" stroke-width="1.400"><path d="M1 5l3.500 3.500L11 1.500" /></svg>已应用</button>
        </div>
        <button class="clear link">清空对话</button>
      </div>
      <div class="write">
        <textarea aria-label="提问" .value=${"/dataQuery"}></textarea>
        <button class="send"><svg viewBox="0 0 12 12"><path d="M1 7.500L11 1v10L8 9.500M1 7.500l3 1L10.500 1.500 6 9v2.500" /></svg>发送</button>
      </div>
    </div></div></aside>`;
  }

  render() {
    return html`<div class="page">
      ${this.top()}${this.bar()}
      <div class="body">${this.fields()}${this.tools()}${this.main()}${this.bot()}</div>
    </div>`;
  }
}
